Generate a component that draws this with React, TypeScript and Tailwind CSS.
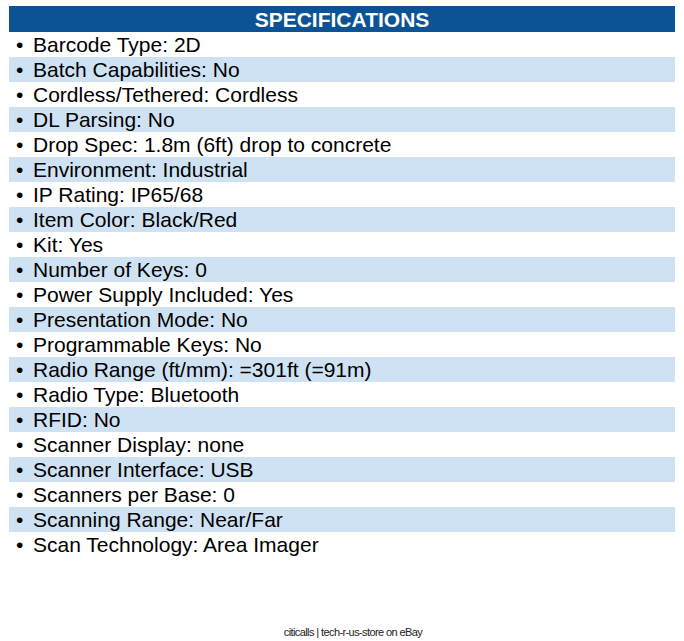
const specs: [string, string][] = [
  ["Barcode Type", "2D"],
  ["Batch Capabilities", "No"],
  ["Cordless/Tethered", "Cordless"],
  ["DL Parsing", "No"],
  ["Drop Spec", "1.8m (6ft) drop to concrete"],
  ["Environment", "Industrial"],
  ["IP Rating", "IP65/68"],
  ["Item Color", "Black/Red"],
  ["Kit", "Yes"],
  ["Number of Keys", "0"],
  ["Power Supply Included", "Yes"],
  ["Presentation Mode", "No"],
  ["Programmable Keys", "No"],
  ["Radio Range (ft/mm)", "=301ft (=91m)"],
  ["Radio Type", "Bluetooth"],
  ["RFID", "No"],
  ["Scanner Display", "none"],
  ["Scanner Interface", "USB"],
  ["Scanners per Base", "0"],
  ["Scanning Range", "Near/Far"],
  ["Scan Technology", "Area Imager"],
];

export default function App() {
  return (
    <div className="w-[684px] h-[641px] bg-white flex flex-col font-['Liberation_Sans',Arial,sans-serif] text-black">
      <div className="mx-[9px] mt-[6px] w-[666px]">
        <div className="h-[26px] bg-[#0b5394] text-white font-bold text-[21px] leading-[27px] text-center">
          SPECIFICATIONS
        </div>
        <ul>
          {specs.map(([k, v], i) => (
            <li
              key={k}
              className={
                "h-[25px] flex items-center text-[21px] leading-[25px] " +
                (i % 2 === 1 ? "bg-[#cfe2f3]" : "bg-white")
              }
            >
              <span className="w-[24px] pl-[7px]">•</span>
              <span>
                {k}: {v}
              </span>
            </li>
          ))}
        </ul>
      </div>
      <div className="mt-auto mb-[2px] pl-[22px] text-center text-[11px] tracking-[-0.6px] leading-[14px] text-[#222]">
        citicalls | tech-r-us-store on eBay
      </div>
    </div>
  );
}
